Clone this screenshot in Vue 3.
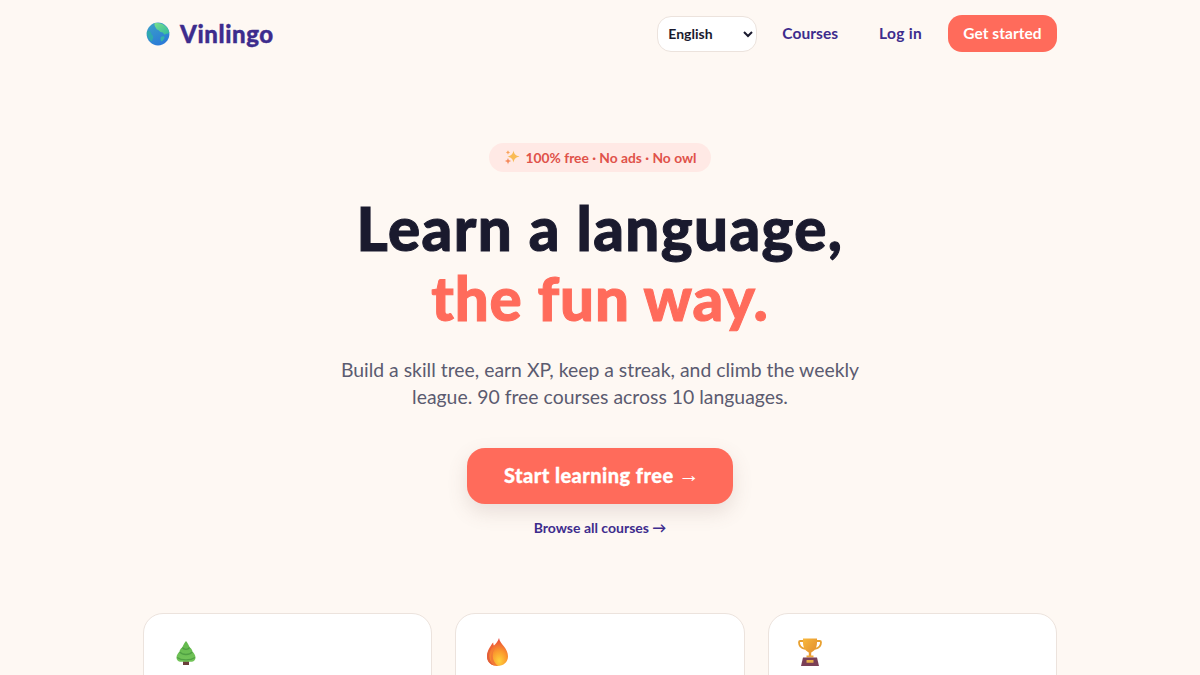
<script setup>
const features = ['tree', 'flame', 'trophy']
</script>

<template>
  <div class="page">
    <header class="nav">
      <a class="logo">
        <svg class="globe" viewBox="0 0 24 24" width="24" height="24" aria-hidden="true">
          <defs>
            <linearGradient id="sea" x1="0.2" y1="0" x2="0.7" y2="1">
              <stop offset="0" stop-color="#3aa0c8" />
              <stop offset="1" stop-color="#2a78d8" />
            </linearGradient>
            <linearGradient id="land" x1="0" y1="0" x2="1" y2="1">
              <stop offset="0" stop-color="#7be08a" />
              <stop offset="1" stop-color="#2eb8a0" />
            </linearGradient>
          </defs>
          <circle cx="12" cy="12" r="11.400" fill="url(#sea)" />
          <path d="M8.500 1.300c4-1 9 .4 12.200 4 1.400 1.700 2.200 3.600 2.600 5.400-1 .4-1.600 1.300-2.700 1-1-.3-1.200 1-2.200.8-.9-.2-.7-1.700-1.800-2-1.300-.3-2.600-.6-3.400-1.700-.7-1-2.300-.9-2.800-2.100C9.900 5.400 8 4 8.500 1.300Z" fill="url(#land)" />
          <path d="M1 9.500c1.200-.8 2.500-.5 3.300.3 1.100 1 .8 2.300 1.900 3.200 1 .9 1.400 2.300.7 3.500-.5.900-.6 2-1.100 2.900C2.500 17.200.5 13.500 1 9.500Z" fill="#2fa9ae" />
          <path d="M15 15c1-.8 2.300-1.200 3.200-.5.800.7.300 1.900-.4 2.700-.8.900-1.400 2.200-2.400 2.400-.9-1.200-1.300-3.400-.4-4.600Z" fill="#34b3a8" />
        </svg>
        <span>Vinlingo</span>
      </a>
      <nav class="links">
        <select class="lang">
          <option>English</option>
        </select>
        <a class="link courses">Courses</a>
        <a class="link login">Log in</a>
        <a class="cta-small">Get started</a>
      </nav>
    </header>

    <main class="hero">
      <div class="badge">
        <svg viewBox="0 0 16 16" width="16" height="16" aria-hidden="true">
          <path d="M9.500 1.500c.7 3.600 1.900 5 6 6-4.100 1-5.300 2.400-6 6-.7-3.600-1.900-5-6-6 4.100-1 5.300-2.400 6-6Z" fill="#f9bb55" />
          <path d="M4 8.800c.4 2.100 1.100 2.800 3.200 3.300-2.100.5-2.800 1.200-3.200 3.400-.4-2.200-1.100-2.900-3.200-3.400 2.100-.5 2.800-1.200 3.200-3.300Z" fill="#f58a5c" />
          <path d="M4 1c.3 1.500.7 2 2.200 2.400C4.700 3.800 4.300 4.300 4 5.800c-.3-1.500-.7-2-2.200-2.400C3.300 3 3.700 2.500 4 1Z" fill="#f9a25a" />
        </svg>
        <span>100% free · No ads · No owl</span>
      </div>
      <h1>Learn a language,<br /><span class="accent">the fun way.</span></h1>
      <p class="sub">Build a skill tree, earn XP, keep a streak, and climb the weekly<br />league. 90 free courses across 10 languages.</p>
      <a class="cta"><span>Start learning free</span><span class="arrow">→</span></a>
      <a class="browse">Browse all courses →</a>
    </main>

    <section class="cards">
      <article v-for="f in features" :key="f" class="card">
        <svg v-if="f === 'tree'" viewBox="0 0 24 30" width="24" height="30" aria-hidden="true">
          <defs>
            <linearGradient id="tree" x1="0" y1="0" x2="0" y2="1">
              <stop offset="0" stop-color="#62b84c" />
              <stop offset="1" stop-color="#74c55a" />
            </linearGradient>
          </defs>
          <rect x="10" y="24" width="6" height="4" fill="#6b3f3a" />
          <path d="M13 4c1.600 2 3 4.400 3.800 6.500 1.600 1 2.600 2.700 2.700 4.200 1.500 1.200 2.900 3.400 3 5.500.1 2.300-1.300 4.300-3.500 4.600H7c-2.200-.3-3.600-2.300-3.500-4.600.1-2.100 1.500-4.300 3-5.500.1-1.500 1.100-3.200 2.700-4.200C10 8.400 11.400 6 13 4Z" fill="url(#tree)" />
          <path d="M9.300 10.500c1.900 2.500 5.500 2.500 7.400 0M6.600 14.800c3 3.600 9.800 3.600 12.800 0M4 20.500c4.500 3.200 13.500 3.200 18 0" fill="none" stroke="#3f8f3a" stroke-width="1.300" stroke-opacity=".65" />
        </svg>
        <svg v-else-if="f === 'flame'" viewBox="0 0 24 30" width="24" height="30" aria-hidden="true">
          <defs>
            <radialGradient id="flame" cx="0.58" cy="0.82" r="0.8">
              <stop offset="0" stop-color="#fed23c" />
              <stop offset="0.45" stop-color="#fb9a2e" />
              <stop offset="1" stop-color="#e8423a" />
            </radialGradient>
          </defs>
          <path d="M14 1c.6 3.500 2.800 5.500 5 8.500 2.300 3.200 4 6 4 10 0 5.500-4.500 9.500-10.500 9.500C6.500 29 2 25 2 19.500c0-4 1.300-7 3-9.500.9-1.400 1.800-3.200 3.200-4.500.1 1.300.2 2.300.8 3C11 7 13 4 14 1Z" fill="url(#flame)" />
          <path d="M8 9C5.200 12 3.800 15.500 4.200 19.500c.3 3.800 2.400 7 5.800 9.200C5.500 28 2 24.700 2 19.500c0-4 2.500-8 6-10.500Z" fill="#e25f3a" />
          <path d="M12.500 8c-3 3-5 6.500-4.800 11 .2 4 2 7.500 5.300 10-2.800 0-5-.8-6.200-3C4.500 22 5.500 14 12.500 8Z" fill="#f27a36" />
        </svg>
        <svg v-else viewBox="0 0 24 30" width="24" height="30" aria-hidden="true">
          <defs>
            <linearGradient id="cup" x1="0" y1="0" x2="1" y2="1">
              <stop offset="0" stop-color="#f8b83c" />
              <stop offset="1" stop-color="#e08a2c" />
            </linearGradient>
          </defs>
          <path d="M5.500 4H2.200c-.8 0-1.200.5-1.200 1.200 0 3.500 2.500 6 6 6.600M18.500 4h3.300c.8 0 1.200.5 1.200 1.200 0 3.500-2.500 6-6 6.600" fill="none" stroke="#e8a030" stroke-width="1.800" />
          <path d="M5 1.500h14c.3 5-.2 8.500-2 11-1.200 1.600-2.800 2.300-3.800 3v3.500h-2.400v-3.500c-1-.7-2.600-1.400-3.800-3C5.200 10 4.700 6.500 5 1.500Z" fill="url(#cup)" />
          <rect x="8.500" y="18.500" width="7" height="2" fill="#f0a83a" />
          <path d="M5 20.500h14l2 8.500H3Z" fill="#7a3f56" />
          <rect x="8.500" y="23" width="7" height="2.800" rx=".5" fill="#e8b04a" />
        </svg>
      </article>
    </section>
  </div>
</template>

<style>
html, body { margin: 0; background: #fef8f3; overflow: hidden; }
</style>

<style scoped>
.page {
  height: 675px;
  overflow: hidden;
  background: #fef8f3;
  font-family: Lato, "Noto Sans", sans-serif;
  color: #1a1a2e;
}
.nav {
  box-sizing: border-box;
  width: 914px;
  height: 67px;
  margin: 0 auto;
  display: flex;
  align-items: center;
  justify-content: space-between;
}
.logo {
  display: flex;
  align-items: center;
  gap: 10px;
  margin-left: 3px;
  font-size: 24px;
  font-weight: 900;
  letter-spacing: 0.6px;
  color: #3d2c8d;
  -webkit-text-stroke: 0.4px #3d2c8d;
}
.links { display: flex; align-items: center; }
.lang {
  box-sizing: border-box;
  width: 100px;
  height: 36px;
  padding: 0 6px;
  border: 1px solid #ece3dd;
  border-radius: 14px;
  background: #fff;
  font: 700 14px Lato, sans-serif;
  color: #1a1a2e;
}
.link {
  font-size: 15.500px;
  font-weight: 700;
  letter-spacing: 0.05px;
  color: #3d2c8d;
  position: relative;
  top: -1px;
}
.courses { margin-left: 25px; }
.login { margin-left: 41px; letter-spacing: 0.300px; }
.cta-small {
  margin-left: 26px;
  width: 109px;
  height: 37px;
  padding-bottom: 2px;
  box-sizing: border-box;
  display: flex;
  align-items: center;
  justify-content: center;
  border-radius: 14px;
  background: #ff6b5b;
  color: #fff;
  font-size: 15.500px;
  font-weight: 700;
  letter-spacing: 0.05px;
}
.hero {
  display: flex;
  flex-direction: column;
  align-items: center;
  padding-top: 76px;
}
.badge {
  box-sizing: border-box;
  height: 29px;
  width: 222px;
  padding-bottom: 1px;
  display: flex;
  align-items: center;
  justify-content: center;
  gap: 6px;
  border-radius: 15px;
  background: #ffe9e5;
  color: #e0524a;
  font-size: 13.800px;
  font-weight: 700;
}
h1 {
  margin: 21px 0 0;
  font-size: 60px;
  line-height: 70px;
  font-weight: 900;
  letter-spacing: 1.400px;
  text-align: center;
  color: #1a1a2e;
  -webkit-text-stroke: 1px #1a1a2e;
}
.accent { color: #ff6b5b; letter-spacing: 0.800px; -webkit-text-stroke: 1px #ff6b5b; }
.sub {
  margin: 23px 0 0;
  font-size: 19.400px;
  line-height: 27px;
  text-align: center;
  color: #5b5b70;
}
.cta {
  margin-top: 38px;
  width: 266px;
  height: 56px;
  padding: 0 0 2px 4px;
  box-sizing: border-box;
  display: flex;
  align-items: center;
  justify-content: center;
  gap: 5px;
  border-radius: 18px;
  background: #ff6b5b;
  color: #fff;
  font-size: 20px;
  font-weight: 900;
  letter-spacing: 0.450px;
  box-shadow: 0 8px 20px rgba(120, 90, 80, 0.16);
  -webkit-text-stroke: 0.3px #fff;
}
.arrow {
  font-family: "Liberation Sans", sans-serif;
  font-size: 21px;
  font-weight: 400;
  -webkit-text-stroke: 0;
}
.browse {
  margin-top: 15px;
  font-size: 14px;
  font-weight: 700;
  color: #3d2c8d;
}
.cards {
  box-sizing: border-box;
  width: 914px;
  margin: 77px auto 0;
  display: grid;
  grid-template-columns: repeat(3, 1fr);
  gap: 23px;
}
.card {
  box-sizing: border-box;
  height: 200px;
  padding: 23px 29px;
  border: 1px solid #ece3dd;
  border-radius: 20px;
  background: #fff;
}
.card svg { display: block; }
</style>
